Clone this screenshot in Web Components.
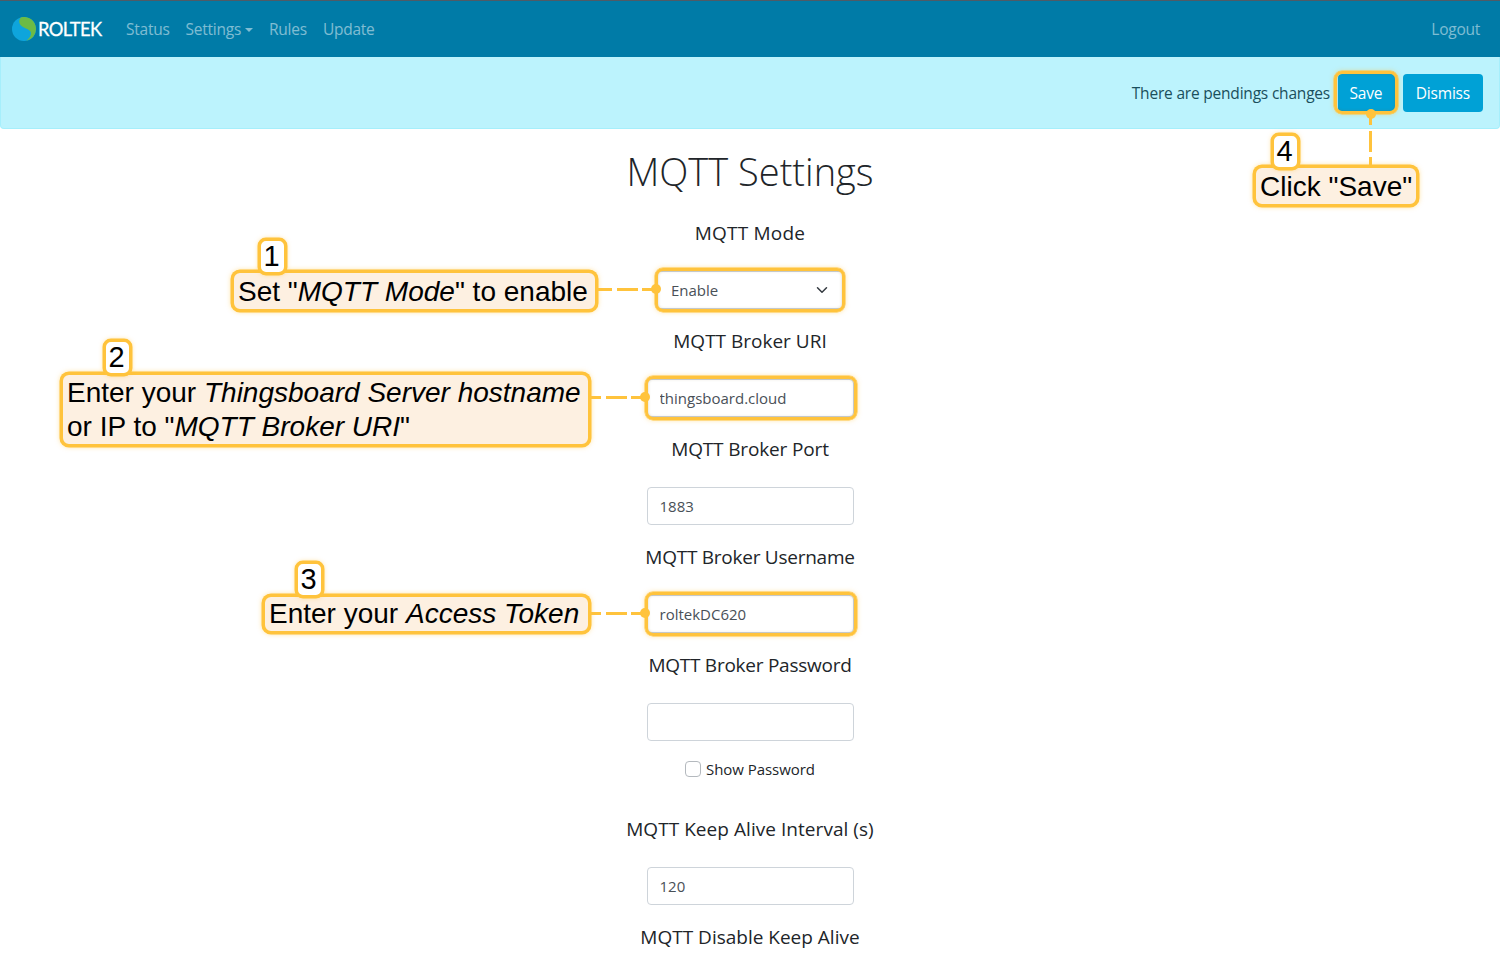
<!DOCTYPE html>
<html lang="en">
<head>
<meta charset="utf-8">
<title>MQTT Settings</title>
<style>
  html, body { margin: 0; padding: 0; background: #fff; }
  body { position: relative; width: 1500px; height: 970px; overflow: hidden; font-family: "Open Sans", "Noto Sans", sans-serif; color: #212529; }
</style>
</head>
<body>
<rt-navbar></rt-navbar>
<rt-alert>There are pendings changes</rt-alert>
<rt-page>
  <rt-field label="MQTT Mode" type="select" value="Enable" track="0.2"></rt-field>
  <rt-field label="MQTT Broker URI" value="thingsboard.cloud"></rt-field>
  <rt-field label="MQTT Broker Port" value="1883" track="-0.15"></rt-field>
  <rt-field label="MQTT Broker Username" value="roltekDC620" track="-0.25"></rt-field>
  <rt-field label="MQTT Broker Password" type="password" value="" track="-0.25"></rt-field>
  <rt-field label="MQTT Keep Alive Interval (s)" value="120" track="0.05"></rt-field>
  <rt-field label="MQTT Disable Keep Alive" type="label-only"></rt-field>
</rt-page>

<!-- tutorial annotations drawn over the page -->
<rt-ring x="655" y="268" w="190" h="44"></rt-ring>
<rt-ring x="645" y="376" w="212" h="44"></rt-ring>
<rt-ring x="645" y="592" w="212" h="44"></rt-ring>
<rt-ring x="1334" y="71" w="64" h="43"></rt-ring>

<rt-wire x="598" y="289" len="58"></rt-wire>
<rt-wire x="591" y="397" len="54"></rt-wire>
<rt-wire x="591" y="613" len="54"></rt-wire>
<rt-wire x="1370.5" y="114" len="52" vertical></rt-wire>

<rt-callout x="231" y="270" w="367" h="42" num="1" nx="27" ny="-35"><span>Set "<i>MQTT Mode</i>" to enable</span></rt-callout>
<rt-callout x="60" y="372" w="531" h="75" num="2" nx="43"><span>Enter your <i>Thingsboard Server hostname</i><br>or IP to "<i>MQTT Broker URI</i>"</span></rt-callout>
<rt-callout x="262" y="594" w="329" h="40" num="3" nx="33" style="padding-top: 0"><span>Enter your <i>Access Token</i></span></rt-callout>
<rt-callout x="1253" y="165" w="166" h="42" num="4" nx="18" ny="-35"><span>Click "Save"</span></rt-callout>

<script>
function sheet(el, html) {
  const template = document.createElement('template');
  template.innerHTML = html;
  el.attachShadow({ mode: 'open' }).appendChild(template.content.cloneNode(true));
}

class RtNavbar extends HTMLElement {
  constructor() {
    super();
    sheet(this, `
      <style>
        :host { display: flex; align-items: center; box-sizing: border-box; height: 57px; padding: 0 20px 1px 12px; background: #007ba7; border-top: 1px solid #4f5b66; font-size: 15.5px; }
        .brand { display: flex; align-items: center; gap: 2px; color: #fff; font: 400 18.3px Lato, sans-serif; letter-spacing: -0.6px; margin-right: 24.5px; -webkit-text-stroke: 0.3px #fff; }
        nav { display: flex; gap: 16px; }
        a { color: rgba(255,255,255,.5); text-decoration: none; letter-spacing: -0.25px; }
        .caret { display: inline-block; margin-left: 4px; vertical-align: 3px; border-top: 4px solid; border-left: 4px solid transparent; border-right: 4px solid transparent; }
        .logout { margin-left: auto; }
      </style>
      <div class="brand">
        <svg width="24" height="24" viewBox="0 0 24 24">
          <circle cx="12" cy="12" r="12" fill="#0ea5dc"/>
          <path d="M8.7 .4C6.5 3.5 6.5 7.5 11 10 15 12.2 19 13 19 16.5 19 19 17 21.5 14.3 23.8A12 12 0 0 0 24 12 12 12 0 0 0 8.7 .4Z" fill="#6cbb45"/>
        </svg>
        <span>ROLTEK</span>
      </div>
      <nav>
        <a href="#">Status</a>
        <a href="#">Settings<span class="caret"></span></a>
        <a href="#">Rules</a>
        <a href="#">Update</a>
      </nav>
      <a class="logout" href="#">Logout</a>
    `);
  }
}

class RtAlert extends HTMLElement {
  constructor() {
    super();
    sheet(this, `
      <style>
        :host { display: flex; align-items: center; justify-content: flex-end; box-sizing: border-box; height: 72px; padding: 0 16px 0 0; background: #bcf3fd; border: 1px solid #a6effc; border-top: 0; border-radius: 0 0 4px 4px; color: #1a4f5c; font-size: 15.5px; letter-spacing: -0.2px; }
        button { height: 38px; padding: 0 13px; margin-left: 7px; border: 0; border-radius: 4px; background: #00a1d6; color: #fff; font: inherit; letter-spacing: -0.2px; }
        .save { margin-left: 8px; padding-right: 13.5px; padding-left: 11.5px; }
      </style>
      <slot></slot>
      <button class="save">Save</button>
      <button>Dismiss</button>
    `);
  }
}

class RtPage extends HTMLElement {
  constructor() {
    super();
    sheet(this, `
      <style>
        :host { display: flex; flex-direction: column; align-items: center; }
        h1 { margin: 18px 0 26px; font-size: 38px; line-height: 48px; font-weight: 300; color: #212529; }
        .form { width: 207px; display: flex; flex-direction: column; }
      </style>
      <h1>MQTT Settings</h1>
      <div class="form"><slot></slot></div>
    `);
  }
}

class RtField extends HTMLElement {
  constructor() {
    super();
    const type = this.getAttribute('type') || 'text';
    const value = this.getAttribute('value') || '';
    let control = `<input type="text" value="${value}">`;
    if (type === 'select') {
      control = `<div class="select"><select><option>${value}</option></select>
        <svg width="12" height="12" viewBox="0 0 16 16"><path d="M2 5l6 6 6-6" fill="none" stroke="#343a40" stroke-width="2" stroke-linecap="round" stroke-linejoin="round"/></svg></div>`;
    } else if (type === 'password') {
      control = `<input type="password"><label class="check"><input type="checkbox">Show Password</label>`;
    } else if (type === 'label-only') {
      control = '';
    }
    sheet(this, `
      <style>
        :host { display: block; text-align: center; padding-bottom: 20px; }
        .title { display: block; white-space: nowrap; line-height: 24px; font-size: 19px; letter-spacing: ${this.getAttribute('track') || 0}px; margin: 0 -40px 26px; color: #212529; }
        input[type=text], input[type=password], select { display: block; box-sizing: border-box; width: 207px; height: 38px; margin: 0; padding: 0 12px 1px; border: 1px solid #ced4da; border-radius: 4px; background: #fff; color: #495057; font: 15px "Open Sans", sans-serif; outline: 0; appearance: none; }
        .select { position: relative; width: 190px; margin: 0 auto; }
        .select select { width: 190px; padding-left: 15px; }
        .select svg { position: absolute; right: 17px; top: 13px; }
        .check { display: flex; align-items: center; justify-content: center; gap: 5px; height: 24px; margin-top: 16px; margin-bottom: 16px; font-size: 15px; letter-spacing: -0.05px; color: #212529; }
        .check input { appearance: none; box-sizing: border-box; width: 16px; height: 16px; margin: 0; border: 1px solid #b4b9be; border-radius: 4px; background: #fff; }
      </style>
      <span class="title">${this.getAttribute('label')}</span>
      ${control}
    `);
  }
}

// boxes below sit at their place on the screenshot: they lie over the form
function place(el, extra) {
  const a = n => el.getAttribute(n);
  return `position: absolute; left: ${a('x')}px; top: ${a('y')}px; ${extra || ''}`;
}

class RtRing extends HTMLElement {
  constructor() {
    super();
    sheet(this, `
      <style>
        :host { ${place(this, `width: ${this.getAttribute('w')}px; height: ${this.getAttribute('h')}px;`)} box-sizing: border-box; border: 3px solid #ffc33c; border-radius: 8px; box-shadow: 0 0 0 .5px #ffc33c, 0 0 5px rgba(255,195,60,.5), inset 0 0 3px rgba(120,110,60,.3); }
      </style>
    `);
  }
}

class RtWire extends HTMLElement {
  constructor() {
    super();
    const len = +this.getAttribute('len');
    const v = this.hasAttribute('vertical');
    const c = '#ffc33c';
    const box = v ? `margin-left: -1.5px; width: 3px; height: ${len}px;` : `margin-top: -1.5px; width: ${len}px; height: 3px;`;
    // the dash phase runs from the dot, so the dashes end up where the reference has them
    const dash = v
      ? `linear-gradient(to bottom, ${c} 0 11px, transparent 11px 17px, ${c} 17px 38px, transparent 38px 43px, ${c} 43px)`
      : `linear-gradient(to left, ${c} 0 14px, transparent 14px 18px, ${c} 18px 39px, transparent 39px 44px, ${c} 44px)`;
    sheet(this, `
      <style>
        :host { ${place(this, box)} background: ${dash}; }
        i { position: absolute; width: 10px; height: 10px; border-radius: 50%; background: ${c}; ${v ? 'left: -3.5px; top: -5px;' : 'right: -5px; top: -3.5px;'} }
      </style>
      <i></i>
    `);
  }
}

class RtCallout extends HTMLElement {
  constructor() {
    super();
    sheet(this, `
      <style>
        :host { ${place(this, `width: ${this.getAttribute('w')}px; height: ${this.getAttribute('h')}px;`)} box-sizing: border-box; display: flex; align-items: center; padding: 1px 4px 0; background: #fdf0e1; border: 3px solid #ffc33c; border-radius: 9px; box-shadow: 0 0 0 .5px #ffc33c, 0 0 5px rgba(255,195,60,.55); font: 28px/34px "Liberation Sans", Arial, sans-serif; color: #000; white-space: nowrap; }
        .num { position: absolute; left: ${this.getAttribute('nx') - 3}px; top: ${this.getAttribute('ny') || -36}px; box-sizing: border-box; width: 29px; height: 37px; padding: 0 2px 1px 0; display: flex; align-items: center; justify-content: center; background: #fff; border: 3px solid #ffc33c; border-radius: 8px; box-shadow: 0 0 0 .5px #ffc33c, 0 0 4px rgba(255,195,60,.5); font-size: 29px; }
      </style>
      <div class="num">${this.getAttribute('num')}</div>
      <slot></slot>
    `);
  }
}

customElements.define('rt-navbar', RtNavbar);
customElements.define('rt-alert', RtAlert);
customElements.define('rt-page', RtPage);
customElements.define('rt-field', RtField);
customElements.define('rt-ring', RtRing);
customElements.define('rt-wire', RtWire);
customElements.define('rt-callout', RtCallout);
</script>
</body>
</html>
